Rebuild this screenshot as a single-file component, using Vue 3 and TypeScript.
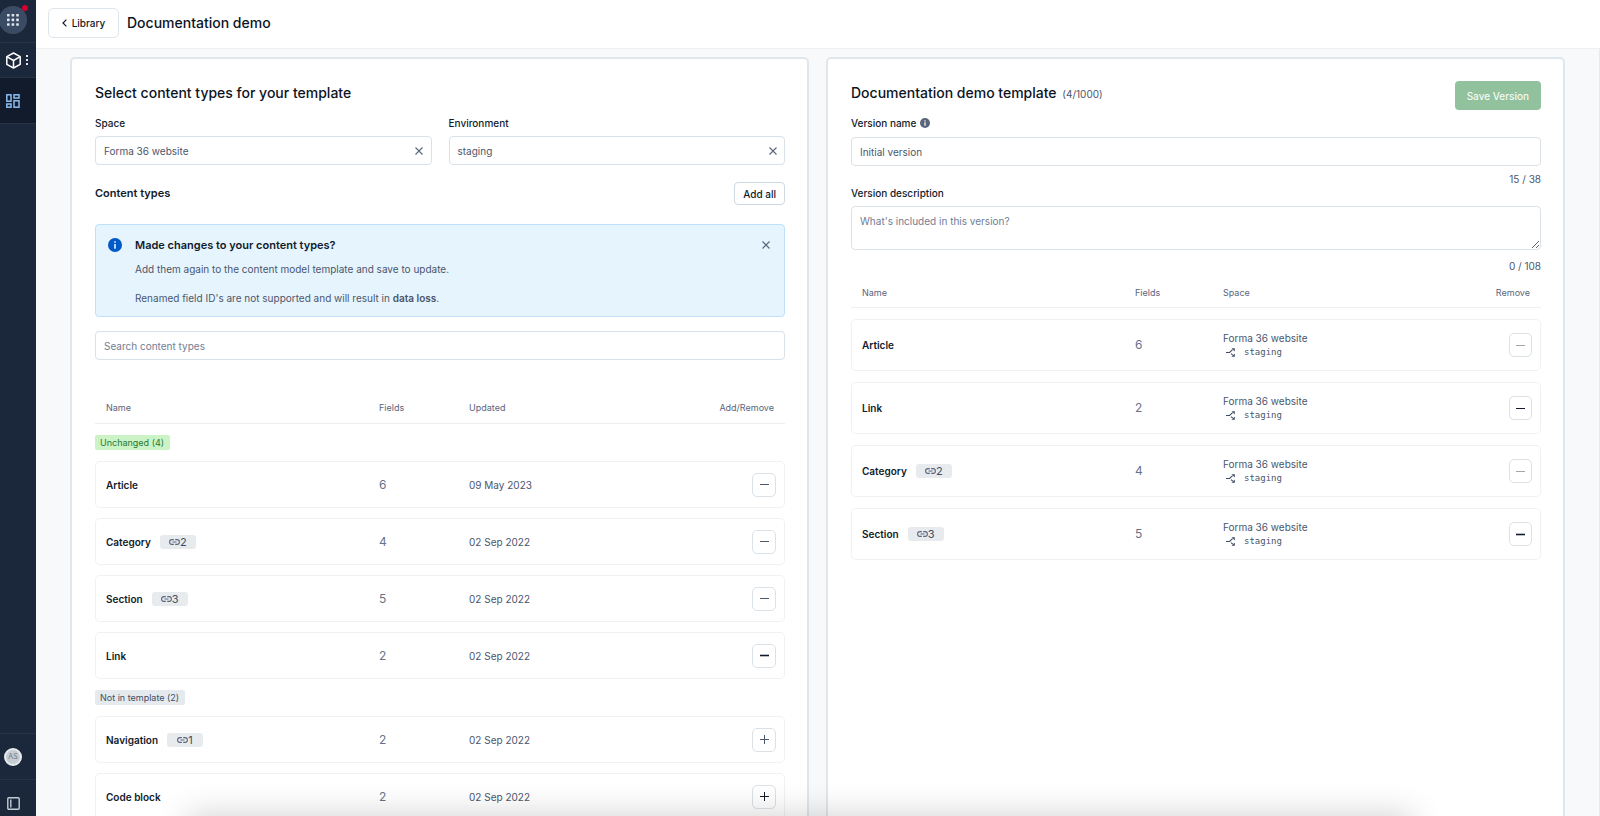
<script setup lang="ts">
import { ref } from 'vue'

type Weight = 'soft' | 'mid' | 'dark' | 'bold'

interface ContentType {
  name: string
  links?: number
  fields: number
  updated: string
  weight: Weight
}

interface TypeGroup {
  label: string
  tone: 'positive' | 'neutral'
  added: boolean
  items: ContentType[]
}

interface TemplateEntry {
  name: string
  links?: number
  fields: number
  space: string
  environment: string
  weight: Weight
}

const space = ref('Forma 36 website')
const environment = ref('staging')
const search = ref('')
const versionName = ref('Initial version')
const description = ref('')
const noteOpen = ref(true)

const groups: TypeGroup[] = [
  {
    label: 'Unchanged (4)',
    tone: 'positive',
    added: true,
    items: [
      { name: 'Article', fields: 6, updated: '09 May 2023', weight: 'mid' },
      { name: 'Category', links: 2, fields: 4, updated: '02 Sep 2022', weight: 'mid' },
      { name: 'Section', links: 3, fields: 5, updated: '02 Sep 2022', weight: 'mid' },
      { name: 'Link', fields: 2, updated: '02 Sep 2022', weight: 'bold' },
    ],
  },
  {
    label: 'Not in template (2)',
    tone: 'neutral',
    added: false,
    items: [
      { name: 'Navigation', links: 1, fields: 2, updated: '02 Sep 2022', weight: 'mid' },
      { name: 'Code block', fields: 2, updated: '02 Sep 2022', weight: 'dark' },
    ],
  },
]

const entries: TemplateEntry[] = [
  { name: 'Article', fields: 6, space: 'Forma 36 website', environment: 'staging', weight: 'soft' },
  { name: 'Link', fields: 2, space: 'Forma 36 website', environment: 'staging', weight: 'dark' },
  { name: 'Category', links: 2, fields: 4, space: 'Forma 36 website', environment: 'staging', weight: 'soft' },
  { name: 'Section', links: 3, fields: 5, space: 'Forma 36 website', environment: 'staging', weight: 'bold' },
]
</script>

<template>
  <div class="app">
    <nav class="sidebar" aria-label="Main">
      <div class="side-cell side-apps">
        <button class="apps" type="button" aria-label="Apps">
          <svg width="12" height="12" viewBox="0 0 12 12" fill="#dfe6ee">
            <template v-for="r in 3" :key="r">
              <rect v-for="c in 3" :key="c" :x="(c - 1) * 4.6" :y="(r - 1) * 4.6" width="2.6" height="2.6" rx="0.6" />
            </template>
          </svg>
          <span class="dot"></span>
        </button>
      </div>
      <div class="side-cell side-product">
        <button class="plain product" type="button" aria-label="Product menu">
          <svg width="17" height="17" viewBox="0 0 17 17" fill="none" stroke="#fff" stroke-width="1.5" stroke-linejoin="round">
            <path d="M8.5 1 15.2 4.7v7.6L8.5 16 1.8 12.3V4.7z" />
            <path d="M1.8 4.7 8.5 8.5l6.7-3.8M8.5 8.5V16" />
          </svg>
          <svg width="3" height="10" viewBox="0 0 3 10" fill="#dfe6ee">
            <rect x="0" y="0" width="2" height="2" /><rect x="0" y="4" width="2" height="2" /><rect x="0" y="8" width="2" height="2" />
          </svg>
        </button>
      </div>
      <a class="side-cell side-active" href="#templates" aria-label="Templates">
        <svg width="14" height="14" viewBox="0 0 14 14" fill="none" stroke="#8bbdf2" stroke-width="1.5">
          <rect x="0.8" y="0.8" width="4.2" height="6.4" /><rect x="8" y="0.8" width="5" height="3.2" />
          <rect x="0.8" y="10" width="4.2" height="3.2" /><rect x="8" y="6.8" width="5" height="6.4" />
        </svg>
      </a>
      <div class="side-space"></div>
      <div class="side-cell side-user">
        <button class="avatar" type="button">AS</button>
      </div>
      <div class="side-cell side-toggle">
        <button class="plain" type="button" aria-label="Toggle sidebar">
          <svg width="13" height="13" viewBox="0 0 13 13" fill="none" stroke="#c3cbd6" stroke-width="1.4">
            <rect x="0.8" y="0.8" width="11.4" height="11.4" rx="1" /><path d="M3.8 2.5v8" />
          </svg>
        </button>
      </div>
    </nav>

    <div class="page">
      <header class="topbar">
        <a class="back" href="#library">
          <svg width="5" height="8" viewBox="0 0 5 8" fill="none" stroke="#111b2b" stroke-width="1.2"><path d="M4.4.6 1 4l3.4 3.4" /></svg>
          Library
        </a>
        <h1>Documentation demo</h1>
      </header>

      <main class="panels">
        <section class="panel">
          <h2>Select content types for your template</h2>
          <div class="pair">
            <div class="field">
              <label for="space">Space</label>
              <div class="clearable">
                <input id="space" v-model="space" class="control" type="text" />
                <button class="clear" type="button" aria-label="Clear space" @click="space = ''">
                  <svg width="8" height="8" viewBox="0 0 8 8" fill="none" stroke="#5a657c" stroke-width="1.1"><path d="m.5.5 7 7m0-7-7 7" /></svg>
                </button>
              </div>
            </div>
            <div class="field">
              <label for="environment">Environment</label>
              <div class="clearable">
                <input id="environment" v-model="environment" class="control" type="text" />
                <button class="clear" type="button" aria-label="Clear environment" @click="environment = ''">
                  <svg width="8" height="8" viewBox="0 0 8 8" fill="none" stroke="#5a657c" stroke-width="1.1"><path d="m.5.5 7 7m0-7-7 7" /></svg>
                </button>
              </div>
            </div>
          </div>

          <div class="types-head">
            <h3>Content types</h3>
            <button class="add-all" type="button">Add all</button>
          </div>

          <div v-if="noteOpen" class="note" role="note">
            <svg class="note-icon" width="14" height="14" viewBox="0 0 14 14">
              <circle cx="7" cy="7" r="7" fill="#0059c8" /><path d="M6.2 3.2h1.6v1.5H6.2zM6.2 5.9h1.6v4.9H6.2z" fill="#e8f5ff" />
            </svg>
            <div class="note-body">
              <h4>Made changes to your content types?</h4>
              <p>Add them again to the content model template and save to update.</p>
              <p>Renamed field ID's are not supported and will result in <strong>data loss</strong>.</p>
            </div>
            <button class="plain note-close" type="button" aria-label="Dismiss" @click="noteOpen = false">
              <svg width="8" height="8" viewBox="0 0 8 8" fill="none" stroke="#5a657c" stroke-width="1.1"><path d="m.5.5 7 7m0-7-7 7" /></svg>
            </button>
          </div>

          <input v-model="search" class="control" type="text" aria-label="Search content types" placeholder="Search content types" />

          <table class="list types">
            <colgroup><col class="c-name" /><col class="c-fields" /><col /><col class="c-action" /></colgroup>
            <thead>
              <tr><th scope="col">Name</th><th scope="col">Fields</th><th scope="col">Updated</th><th scope="col" class="end">Add/Remove</th></tr>
            </thead>
            <tbody v-for="group in groups" :key="group.label">
              <tr>
                <th class="group" colspan="4" scope="rowgroup"><span class="badge" :class="group.tone">{{ group.label }}</span></th>
              </tr>
              <tr v-for="item in group.items" :key="item.name" class="row">
                <td class="name">
                  <div class="name-line">
                    {{ item.name }}
                    <span v-if="item.links" class="links">
                      <svg width="11" height="6" viewBox="0 0 11 6" fill="none" stroke="#5a657c" stroke-width="1.1"><path d="M4.8.6H3a2.4 2.4 0 0 0 0 4.8h1.8M6.2.6H8a2.4 2.4 0 0 1 0 4.8H6.2M3.5 3h4" /></svg>{{ item.links }}
                    </span>
                  </div>
                </td>
                <td class="count">{{ item.fields }}</td>
                <td>{{ item.updated }}</td>
                <td class="action">
                  <button class="toggle" :class="item.weight" type="button" :aria-label="(group.added ? 'Remove ' : 'Add ') + item.name">
                    <svg width="9" height="9" viewBox="0 0 9 9" fill="none" stroke="currentColor"><path :d="group.added ? 'M0 4.5h9' : 'M0 4.5h9M4.5 0v9'" /></svg>
                  </button>
                </td>
              </tr>
            </tbody>
          </table>
        </section>

        <section class="panel">
          <div class="template-head">
            <h2>Documentation demo template <span class="tally">(4/1000)</span></h2>
            <button class="save" type="button">Save Version</button>
          </div>
          <div class="field version-field">
            <label for="version-name">Version name
              <svg width="10" height="10" viewBox="0 0 10 10"><circle cx="5" cy="5" r="5" fill="#5a657c" /><path d="M4.4 2.2h1.2v1.2H4.4zM4.4 4.2h1.2v3.6H4.4z" fill="#fff" /></svg>
            </label>
            <input id="version-name" v-model="versionName" class="control" type="text" />
            <span class="counter">{{ versionName.length }} / 38</span>
          </div>
          <div class="field description-field">
            <label for="version-description">Version description</label>
            <textarea id="version-description" v-model="description" class="control" placeholder="What's included in this version?"></textarea>
            <span class="counter">{{ description.length }} / 108</span>
          </div>

          <table class="list template">
            <colgroup><col class="c-name" /><col class="c-fields" /><col /><col class="c-action" /></colgroup>
            <thead>
              <tr><th scope="col">Name</th><th scope="col">Fields</th><th scope="col">Space</th><th scope="col" class="end">Remove</th></tr>
            </thead>
            <tbody>
              <tr v-for="entry in entries" :key="entry.name" class="row">
                <td class="name">
                  <div class="name-line">
                    {{ entry.name }}
                    <span v-if="entry.links" class="links">
                      <svg width="11" height="6" viewBox="0 0 11 6" fill="none" stroke="#5a657c" stroke-width="1.1"><path d="M4.8.6H3a2.4 2.4 0 0 0 0 4.8h1.8M6.2.6H8a2.4 2.4 0 0 1 0 4.8H6.2M3.5 3h4" /></svg>{{ entry.links }}
                    </span>
                  </div>
                </td>
                <td class="count">{{ entry.fields }}</td>
                <td>
                  <div>{{ entry.space }}</div>
                  <div class="env">
                    <svg width="9" height="9" viewBox="0 0 9 9" fill="none" stroke="#414d63" stroke-width="1.1">
                      <path d="M0 4.5h3.6l3-2.8M5 5.6l1.8 1.6" /><path d="M5.6.2h3.2v3.2zM8.8 5.4v3.4H5.4z" fill="#414d63" stroke="none" />
                    </svg>
                    <span>{{ entry.environment }}</span>
                  </div>
                </td>
                <td class="action">
                  <button class="toggle" :class="entry.weight" type="button" :aria-label="'Remove ' + entry.name">
                    <svg width="9" height="9" viewBox="0 0 9 9" fill="none" stroke="currentColor"><path d="M0 4.5h9" /></svg>
                  </button>
                </td>
              </tr>
            </tbody>
          </table>
        </section>
      </main>
    </div>
    <div class="edge-shade"></div>
  </div>
</template>

<style>
html,
body {
  margin: 0;
  overflow: hidden;
}
</style>

<style scoped>
.app {
  display: flex;
  height: 100vh;
  overflow: hidden;
  background: #f7f9fa;
  color: #4b566c;
  font: 400 10px/14px Inter, sans-serif;
}

.app * {
  box-sizing: border-box;
}

button,
input,
textarea {
  font: inherit;
  color: inherit;
}

button {
  padding: 0;
  cursor: pointer;
}

svg {
  flex: none;
}

h1,
h2,
h3,
h4,
p {
  margin: 0;
}

.plain {
  display: flex;
  align-items: center;
  padding: 0;
  border: 0;
  background: none;
}

.sidebar {
  display: flex;
  flex: none;
  flex-direction: column;
  width: 36px;
  background: #1b273a;
}

.side-cell {
  display: flex;
  align-items: center;
  border-bottom: 1px solid #263347;
}

.side-apps {
  height: 43px;
}

.apps {
  position: relative;
  display: flex;
  align-items: center;
  justify-content: center;
  width: 28px;
  height: 28px;
  margin: 0 0 3px -1px;
  border: 0;
  border-radius: 50%;
  background: #3b4b63;
}

.dot {
  position: absolute;
  top: -1px;
  right: -1px;
  width: 6px;
  height: 6px;
  border-radius: 50%;
  background: #d3012f;
}

.side-product {
  height: 35px;
  padding-left: 5px;
}

.product {
  gap: 4px;
}

.side-active {
  height: 46px;
  padding-left: 6px;
  background: #111b2b;
}

.side-space {
  flex: 1;
}

.side-user {
  height: 47px;
  padding-left: 4px;
  border-top: 1px solid #263347;
}

.avatar {
  width: 18px;
  height: 18px;
  border: 2px solid #e7ebee;
  border-radius: 50%;
  background: #c5cdd3;
  color: #6a7684;
  font-size: 7px;
  line-height: 14px;
}

.side-toggle {
  align-items: flex-start;
  height: 36px;
  padding: 17px 0 0 7px;
  border: 0;
}

.page {
  display: flex;
  flex: 1;
  flex-direction: column;
  min-width: 0;
}

.topbar {
  display: flex;
  flex: none;
  align-items: center;
  gap: 8px;
  height: 49px;
  padding: 0 12px 3px;
  border-bottom: 1px solid #eef1f4;
  background: #fff;
}

.back {
  display: flex;
  align-items: center;
  justify-content: center;
  gap: 5px;
  width: 71px;
  height: 30px;
  border: 1px solid #dfe6eb;
  border-radius: 5px;
  color: #111b2b;
  font-weight: 500;
  text-decoration: none;
}

h1,
h2 {
  color: #0c1424;
  font-size: 14px;
  font-weight: 500;
  line-height: 20px;
}

.panels {
  display: grid;
  flex: 1;
  grid-template-columns: 1fr 1fr;
  gap: 17px;
  min-height: 0;
  padding: 8px 34px 0;
  overflow: hidden;
  border-right: 1px solid #e5ebed;
}

.panel {
  min-width: 0;
  padding: 24px 22px 24px 23px;
  border: 2px solid #e0e7ec;
  border-radius: 5px;
  background: #fff;
}

.pair {
  display: grid;
  grid-template-columns: 1fr 1fr;
  gap: 17px;
  margin-top: 13px;
}

.field {
  display: flex;
  flex-direction: column;
}

label {
  display: flex;
  align-items: center;
  gap: 4px;
  margin-bottom: 6px;
  color: #111b2b;
  font-weight: 500;
}

.control {
  display: block;
  width: 100%;
  height: 29px;
  padding: 0 8px;
  border: 1px solid #dae2e8;
  border-radius: 4px;
  background: #fff;
  color: #4b566c;
}

.control::placeholder {
  color: #727d94;
  opacity: 1;
}

.clearable {
  position: relative;
}

.clear {
  position: absolute;
  top: 4px;
  right: 2px;
  display: flex;
  align-items: center;
  justify-content: center;
  width: 21px;
  height: 21px;
  border: 0;
  background: none;
}

.types-head {
  display: flex;
  align-items: center;
  justify-content: space-between;
  margin: 17px 0 19px;
}

h3,
h4 {
  color: #111b2b;
  font-size: 11px;
  font-weight: 600;
  line-height: 16px;
}

h3 {
  padding-bottom: 2px;
}

.add-all {
  height: 23px;
  padding: 0 8px;
  border: 1px solid #cfd9e0;
  border-radius: 4px;
  background: #fff;
  color: #111b2b;
  font-weight: 500;
}

.note {
  display: flex;
  align-items: flex-start;
  margin-bottom: 14px;
  padding: 12px 14px 11px 12px;
  border: 1px solid #bfe0fb;
  border-radius: 4px;
  background: #e6f4fe;
}

.note-icon {
  margin: 1px 13px 0 0;
}

.note-body {
  flex: 1;
}

.note-body p {
  margin-top: 9px;
}

.note-body p + p {
  margin-top: 15px;
}

.note-close {
  margin-top: 4px;
}

strong {
  font-weight: 600;
}

.list {
  width: 100%;
  border-collapse: separate;
  table-layout: fixed;
}

.types {
  margin-top: 21px;
  border-spacing: 0 10px;
}

.template {
  margin-top: -6px;
  border-spacing: 0 11px;
}

.c-name {
  width: 272px;
}

.c-fields {
  width: 90px;
}

.template .c-fields {
  width: 88px;
}

.c-action {
  width: 90px;
}

.list thead th {
  height: 33px;
  padding: 2px 12px 0;
  border-bottom: 1px solid #ebeff2;
  color: #5a657c;
  font-size: 9px;
  font-weight: 400;
  line-height: 12px;
  text-align: left;
}

.list thead th:first-child {
  padding-left: 11px;
}

.template thead th {
  height: 30px;
  padding-top: 0;
}

.list thead .end {
  padding-right: 11px;
  text-align: right;
}

.list .group {
  padding: 1px 0;
  font-size: 9px;
  font-weight: 400;
  line-height: 15px;
  text-align: left;
}

.badge {
  display: block;
  width: fit-content;
  padding: 0 6px 0 5px;
  border-radius: 2px;
}

.positive {
  background: #cbf3c6;
  color: #1f7a35;
}

.neutral {
  background: #e5eaee;
  color: #414d63;
}

.row td {
  height: 47px;
  padding: 0 12px;
  border: solid #eff2f4;
  border-width: 1px 0;
}

.template .row td {
  height: 52px;
}

.row td:first-child {
  border-left-width: 1px;
  border-radius: 5px 0 0 5px;
  padding-left: 10px;
}

.row td:last-child {
  border-right-width: 1px;
  border-radius: 0 5px 5px 0;
}

.row .name {
  color: #111b2b;
  font-weight: 600;
}

.name-line {
  display: flex;
  align-items: center;
  gap: 9px;
}

.links {
  display: flex;
  align-items: center;
  justify-content: center;
  width: 36px;
  height: 14px;
  border-radius: 3px;
  background: #e7ebee;
  color: #414d63;
  font-size: 11px;
  font-weight: 400;
}

.row .count {
  color: #67728a;
  font-size: 12px;
}

.row .action {
  padding: 0 8px 0 0;
}

.env {
  display: flex;
  align-items: center;
  gap: 9px;
  padding-left: 3px;
  font-family: "DejaVu Sans Mono", monospace;
  font-size: 9px;
}

.toggle {
  display: flex;
  align-items: center;
  justify-content: center;
  width: 24px;
  height: 24px;
  margin-left: auto;
  border: 1px solid #dae2e8;
  border-radius: 5px;
  background: #fff;
}

.template .toggle {
  width: 23px;
}

.soft {
  color: #a0a6b0;
}

.mid {
  color: #4d586c;
}

.dark {
  color: #111b2b;
}

.bold {
  color: #111b2b;
  stroke-width: 1.6;
}

.template-head {
  display: flex;
  align-items: flex-start;
  justify-content: space-between;
  height: 33px;
}

.tally {
  margin-left: 2px;
  color: #4b566c;
  font-size: 10px;
  font-weight: 400;
}

.save {
  height: 29px;
  margin-top: -2px;
  padding: 0 12px;
  border: 0;
  border-radius: 4px;
  background: #92c29d;
  color: #f2f9f4;
  font-weight: 500;
}

.version-field label {
  margin-bottom: 7px;
}

.counter {
  margin-top: 6px;
  text-align: right;
}

textarea.control {
  height: 44px;
  padding: 8px;
  line-height: 12px;
  resize: vertical;
}

.description-field .counter {
  margin-top: 9px;
}

.edge-shade {
  position: fixed;
  right: 190px;
  bottom: -30px;
  left: 190px;
  height: 28px;
  box-shadow: 0 0 34px 2px rgba(0, 0, 0, 0.2);
  pointer-events: none;
}
</style>
